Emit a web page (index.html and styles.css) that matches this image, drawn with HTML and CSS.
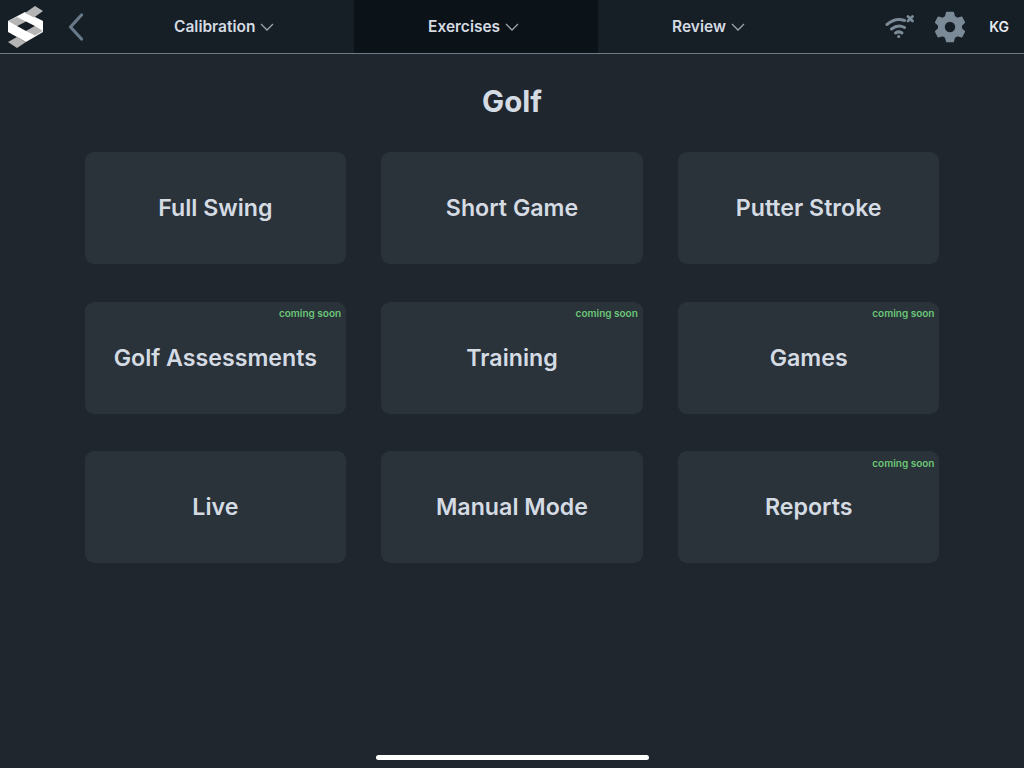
FILE: index.html
```html
<!DOCTYPE html>
<html lang="en">
<head>
    <meta charset="UTF-8">
    <title>Golf</title>
    <link rel="stylesheet" href="styles.css">
</head>
<body>
    <header class="topbar">
        <div class="brand">
            <svg class="logo" width="36" height="44" viewBox="8 5 36 44">
                <polygon points="8,21 25,12 43,21 43,32 26,42 8,32" fill="#ffffff"/>
                <polygon points="25,13 35,6 43,11 34,17.500" fill="#b5b5b5"/>
                <polygon points="8,21 17,17 26,21.500 17,26" fill="#b5b5b5"/>
                <polygon points="26,31 35,26 43,31 35,35.500" fill="#b5b5b5"/>
                <polygon points="17,26 26,21.500 35,26 26,31" fill="#161e26"/>
                <polygon points="8,42 17,37 26,42 17,48" fill="#b5b5b5"/>
            </svg>
            <svg class="back" width="16" height="28" viewBox="0 0 16 28">
                <polyline points="13.500,2 2.500,14 13.500,26" fill="none" stroke="#687a8a" stroke-width="3.200" stroke-linecap="round" stroke-linejoin="round"/>
            </svg>
        </div>
        <nav class="nav">
            <a class="nav-item">Calibration<svg class="chev" width="14" height="8" viewBox="0 0 14 8"><polyline points="1,1 7,7 13,1"/></svg></a>
            <a class="nav-item active">Exercises<svg class="chev" width="14" height="8" viewBox="0 0 14 8"><polyline points="1,1 7,7 13,1"/></svg></a>
            <a class="nav-item">Review<svg class="chev" width="14" height="8" viewBox="0 0 14 8"><polyline points="1,1 7,7 13,1"/></svg></a>
        </nav>
        <div class="status">
            <svg class="wifi" width="30" height="24" viewBox="0 0 30 24" fill="none" stroke="#7b8a97" stroke-width="3" stroke-linecap="round">
                <path d="M2 9.500 C8 4.500 14 3.500 19.500 5.500"/>
                <path d="M6.500 14 C11 10.500 15.500 10.300 19.500 12.500"/>
                <path d="M10.500 18 C12.500 16.600 15 16.600 17 18"/>
                <circle cx="13.700" cy="21.500" r="1.600" fill="#7b8a97" stroke="none"/>
                <path d="M23 1.500 L27.500 6 M27.500 1.500 L23 6" stroke-width="2.800"/>
            </svg>
            <svg class="gear" width="30" height="32" viewBox="0 0 30 32">
                <path fill="#7b8a97" stroke="#7b8a97" stroke-width="1.600" stroke-linejoin="round" fill-rule="evenodd" d="M11.800 1.500 H18.200 L19.300 5.800 L22.500 7.600 L26.700 6.300 L29.300 11.500 L26.200 14.400 V17.600 L29.300 20.500 L26.700 25.700 L22.500 24.400 L19.300 26.200 L18.200 30.500 H11.800 L10.700 26.200 L7.500 24.400 L3.300 25.700 L0.700 20.500 L3.800 17.600 V14.400 L0.700 11.500 L3.300 6.300 L7.500 7.600 L10.700 5.800 Z M15 10 A6 6 0 1 0 15 22 A6 6 0 1 0 15 10 Z"/>
            </svg>
            <span class="user">KG</span>
        </div>
    </header>

    <main class="content">
        <h1 class="page-title">Golf</h1>
        <div class="grid">
            <div class="card">Full Swing</div>
            <div class="card">Short Game</div>
            <div class="card">Putter Stroke</div>
            <div class="card">Golf Assessments<span class="soon">coming soon</span></div>
            <div class="card">Training<span class="soon">coming soon</span></div>
            <div class="card">Games<span class="soon">coming soon</span></div>
            <div class="card">Live</div>
            <div class="card">Manual Mode</div>
            <div class="card">Reports<span class="soon">coming soon</span></div>
        </div>
    </main>

    <div class="home-bar"></div>
</body>
</html>
```

FILE: styles.css
```css
* {
    box-sizing: border-box;
}
body {
    margin: 0;
    height: 768px;
    overflow: hidden;
    background: #1f262e;
    font-family: Inter, "Liberation Sans", sans-serif;
    color: #d5dbe3;
}
.topbar {
    display: flex;
    height: 54px;
    background: #161e26;
    border-bottom: 1px solid #6d7b85;
}
.brand {
    display: flex;
    align-items: center;
    width: 100px;
    padding-left: 8px;
}
.logo {
    margin-top: 1px;
}
.back {
    margin-left: 24px;
    margin-top: 1px;
}
.nav {
    display: flex;
}
.nav-item {
    display: flex;
    align-items: center;
    gap: 5px;
    width: 254px;
    padding-left: 74px;
    font-size: 15.500px;
    font-weight: 600;
    color: #d5dbe3;
}
.nav-item.active {
    width: 244px;
    background: #0b1218;
}
.nav-item + .nav-item {
    width: 244px;
}
.chev {
    fill: none;
    stroke: #9aa5ae;
    stroke-width: 1.300;
}
.status {
    display: flex;
    align-items: center;
    margin-left: auto;
    padding-right: 15px;
}
.wifi {
    margin-right: 20px;
}
.user {
    margin-left: 24px;
    font-size: 14px;
    font-weight: 600;
    color: #e6eaee;
}
.content {
    padding: 0 84.500px;
}
.page-title {
    margin: 29px 0 33px;
    font-size: 29.500px;
    line-height: 36px;
    font-weight: 700;
    text-align: center;
    color: #d5dbe3;
}
.grid {
    display: grid;
    grid-template-columns: repeat(3, 1fr);
    grid-auto-rows: 112px;
    column-gap: 35px;
    row-gap: 37.500px;
}
.card {
    position: relative;
    display: flex;
    align-items: center;
    justify-content: center;
    background: #2a323a;
    border-radius: 9px;
    font-size: 23.200px;
    font-weight: 600;
}
.soon {
    position: absolute;
    top: 4.500px;
    right: 5px;
    font-size: 10px;
    line-height: 14px;
    font-weight: 600;
    color: #6cc677;
}
.home-bar {
    position: absolute;
    left: 376px;
    top: 755px;
    width: 273px;
    height: 5px;
    border-radius: 3px;
    background: #ffffff;
}
```
